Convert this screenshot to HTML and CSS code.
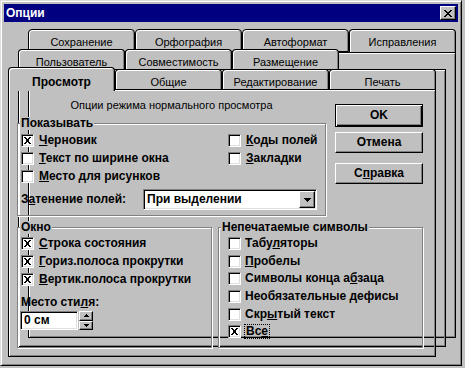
FILE: index.html
```html
<!DOCTYPE html>
<html lang="ru">
<head>
  <meta charset="UTF-8">
  <title>Опции</title>
  <link rel="stylesheet" href="styles.css">
</head>
<body>
  <div class="window">
    <div class="titlebar">
      <span class="title">Опции</span>
      <span class="close-btn raised"><svg width="8" height="7" viewBox="0 0 8 7"><path d="M0 0h2v1H0zM6 0h2v1H6zM1 1h2v1H1zM5 1h2v1H5zM2 2h4v1H2zM3 3h2v1H3zM2 4h4v1H2zM1 5h2v1H1zM5 5h2v1H5zM0 6h2v1H0zM6 6h2v1H6z"/></svg></span>
    </div>
    <div class="client">
      <div class="sheet sheet-1"></div>
      <div class="sheet sheet-2"></div>

      <div class="tabrow row-1">
        <div class="tab closed">Сохранение</div>
        <div class="tab closed">Орфография</div>
        <div class="tab closed">Автоформат</div>
        <div class="tab">Исправления</div>
      </div>
      <div class="tabrow row-2">
        <div class="tab">Пользователь</div>
        <div class="tab">Совместимость</div>
        <div class="tab">Размещение</div>
      </div>
      <div class="tabrow row-3">
        <div class="tab active">Просмотр</div>
        <div class="tab">Общие</div>
        <div class="tab">Редактирование</div>
        <div class="tab">Печать</div>
      </div>

      <div class="page">
        <div class="view-col">
          <p class="caption">Опции режима нормального просмотра</p>
          <div class="group show-group">
            <span class="group-title">Показывать</span>
            <div class="check-grid">
              <div class="check"><span class="box sunken"><svg width="7" height="7" viewBox="0 0 7 7"><path d="M0 0h2v1H0zM5 0h2v1H5zM1 1h2v1H1zM4 1h2v1H4zM2 2h3v1H2zM2 3h3v1H2zM2 4h3v1H2zM1 5h2v1H1zM4 5h2v1H4zM0 6h2v1H0zM5 6h2v1H5z"/></svg></span><span><u>Ч</u>ерновик</span></div>
              <div class="check"><span class="box sunken"></span><span><u>К</u>оды полей</span></div>
              <div class="check"><span class="box sunken"></span><span><u>Т</u>екст по ширине окна</span></div>
              <div class="check"><span class="box sunken"></span><span><u>З</u>акладки</span></div>
              <div class="check"><span class="box sunken"></span><span><u>М</u>есто для рисунков</span></div>
            </div>
            <div class="field-row">
              <span class="field-label">З<u>а</u>тенение полей:</span>
              <div class="select sunken">
                <span class="select-value">При выделении</span>
                <span class="drop-btn raised"><svg width="7" height="4" viewBox="0 0 7 4"><path d="M0 0h7v1H0zM1 1h5v1H1zM2 2h3v1H2zM3 3h1v1H3z"/></svg></span>
              </div>
            </div>
          </div>
        </div>

        <div class="buttons">
          <div class="btn default">OK</div>
          <div class="btn raised">Отмена</div>
          <div class="btn raised help"><span>С<u>п</u>равка</span></div>
        </div>

        <div class="bottom">
          <div class="group window-group">
            <span class="group-title">Окно</span>
            <div class="check"><span class="box sunken"><svg width="7" height="7" viewBox="0 0 7 7"><path d="M0 0h2v1H0zM5 0h2v1H5zM1 1h2v1H1zM4 1h2v1H4zM2 2h3v1H2zM2 3h3v1H2zM2 4h3v1H2zM1 5h2v1H1zM4 5h2v1H4zM0 6h2v1H0zM5 6h2v1H5z"/></svg></span><span><u>С</u>трока состояния</span></div>
            <div class="check"><span class="box sunken"><svg width="7" height="7" viewBox="0 0 7 7"><path d="M0 0h2v1H0zM5 0h2v1H5zM1 1h2v1H1zM4 1h2v1H4zM2 2h3v1H2zM2 3h3v1H2zM2 4h3v1H2zM1 5h2v1H1zM4 5h2v1H4zM0 6h2v1H0zM5 6h2v1H5z"/></svg></span><span><u>Г</u>ориз.полоса прокрутки</span></div>
            <div class="check"><span class="box sunken"><svg width="7" height="7" viewBox="0 0 7 7"><path d="M0 0h2v1H0zM5 0h2v1H5zM1 1h2v1H1zM4 1h2v1H4zM2 2h3v1H2zM2 3h3v1H2zM2 4h3v1H2zM1 5h2v1H1zM4 5h2v1H4zM0 6h2v1H0zM5 6h2v1H5z"/></svg></span><span><u>В</u>ертик.полоса прокрутки</span></div>
            <p class="style-label">Место сти<u>л</u>я:</p>
            <div class="spin-row">
              <span class="spin-input sunken">0 см</span>
              <span class="spinner">
                <span class="spin-btn raised"><svg width="5" height="3" viewBox="0 0 5 3"><path d="M2 0h1v1H2zM1 1h3v1H1zM0 2h5v1H0z"/></svg></span>
                <span class="spin-btn raised"><svg width="5" height="3" viewBox="0 0 5 3"><path d="M0 0h5v1H0zM1 1h3v1H1zM2 2h1v1H2z"/></svg></span>
              </span>
            </div>
          </div>

          <div class="group marks-group">
            <span class="group-title">Непечатаемые символы</span>
            <div class="check"><span class="box sunken"></span><span>Табу<u>л</u>яторы</span></div>
            <div class="check"><span class="box sunken"></span><span><u>П</u>робелы</span></div>
            <div class="check"><span class="box sunken"></span><span>Символы конца а<u>б</u>заца</span></div>
            <div class="check"><span class="box sunken"></span><span>Необязательные <u>д</u>ефисы</span></div>
            <div class="check"><span class="box sunken"></span><span>Скр<u>ы</u>тый текст</span></div>
            <div class="check"><span class="box sunken"><svg width="7" height="7" viewBox="0 0 7 7"><path d="M0 0h2v1H0zM5 0h2v1H5zM1 1h2v1H1zM4 1h2v1H4zM2 2h3v1H2zM2 3h3v1H2zM2 4h3v1H2zM1 5h2v1H1zM4 5h2v1H4zM0 6h2v1H0zM5 6h2v1H5z"/></svg></span><span class="focus">Вс<u>е</u></span></div>
          </div>
        </div>
      </div>
    </div>
  </div>
</body>
</html>
```

FILE: styles.css
```css
*{margin:0;padding:0;box-sizing:border-box}
html,body{width:465px;height:368px;overflow:hidden}
body{background:#c0c0c0;font-family:"Liberation Sans",Arial,sans-serif;font-size:11px;line-height:13px;color:#000}
u{text-decoration:underline;text-underline-offset:1px}
svg{display:block;shape-rendering:crispEdges}

/* 3d edges */
.raised{background:#c0c0c0;border:1px solid;border-color:#fff #000 #000 #fff;box-shadow:inset -1px -1px 0 #808080}
.sunken{background:#fff;border:1px solid;border-color:#808080 #fff #fff #808080;box-shadow:inset 1px 1px 0 #000,inset -1px -1px 0 #dfdfdf}

.window{width:462px;height:366px;padding:3px;border:1px solid;border-color:#dfdfdf #000 #000 #dfdfdf;box-shadow:inset 1px 1px 0 #fff,inset -1px -1px 0 #808080;display:flex;flex-direction:column}
.titlebar{height:18px;flex:none;background:#000080;display:flex;align-items:center;justify-content:space-between;padding:0 2px}
.title{color:#fff;font-weight:bold;font-size:12px}
.close-btn{width:16px;height:14px;display:flex;align-items:center;justify-content:center}
.client{position:relative;flex:1}

/* stacked tab sheets */
.sheet{position:absolute;width:428px;border:1px solid #000;box-shadow:inset 1px 1px 0 #fff,inset -1px -1px 0 #808080}
.sheet-1{left:24px;top:30px;height:286px}
.sheet-2{left:14px;top:47px;height:278px}
.tabrow{position:relative;display:flex;align-items:flex-start}
.row-1{margin:7px 0 0 24px}
.row-2{margin:-3px 0 0 14px}
.row-3{margin:0 0 0 4px;height:20px}
.tab{width:107px;height:20px;flex:none;padding-top:6px;background:#c0c0c0;border:1px solid #000;border-bottom:0;border-radius:4px 4px 0 0;box-shadow:inset 1px 1px 0 #fff,inset -1px 0 0 #808080;text-align:center;white-space:nowrap}
.row-1 .tab{height:23px}
.row-1 .tab.closed{border-bottom:1px solid #000}
.tab.active{position:relative;z-index:2;height:24px;margin-top:-2px;padding-top:8px;font-weight:bold;font-size:12px}

.page{position:relative;z-index:1;margin-left:4px;width:428px;height:268px;padding:9px 12px 0 8px;border:1px solid #000;box-shadow:inset 1px 1px 0 #fff,inset -1px -1px 0 #808080;display:grid;grid-template-columns:309px 88px;column-gap:9px;align-content:start}
.caption{text-align:center}

.group{position:relative;border:1px solid #808080;box-shadow:inset 1px 1px 0 #fff,1px 1px 0 #fff}
.group-title{position:absolute;top:-7px;left:2px;padding:0 1px;background:#c0c0c0;font-weight:bold;font-size:12px;line-height:13px;white-space:nowrap}
.show-group{margin-top:11px;padding:7px 0 5px 3px}
.check-grid{display:grid;grid-template-columns:207px 1fr;grid-auto-rows:18px}
.check{display:flex;align-items:center;height:18px;font-weight:bold;font-size:12px;white-space:nowrap}
.box{width:13px;height:13px;flex:none;margin-right:5px;display:flex;align-items:center;justify-content:center}
.field-row{display:flex;align-items:center;height:21px;margin-top:4px}
.field-label{width:122px;font-weight:bold;font-size:12px}
.select{width:174px;height:21px;padding:1px;display:flex;align-items:center}
.select-value{flex:1;padding-left:2px;font-weight:bold;font-size:12px}
.drop-btn{width:16px;height:17px;display:flex;align-items:center;justify-content:center}

.buttons{display:flex;flex-direction:column;padding-top:5px}
.btn{height:21px;display:flex;align-items:center;justify-content:center;font-weight:bold;font-size:12px}
.btn.default{height:23px;border:1px solid #000;box-shadow:inset 1px 1px 0 #fff,inset -1px -1px 0 #000,inset -2px -2px 0 #808080}
.btn + .btn{margin-top:5px}
.btn.help{margin-top:10px}

.bottom{grid-column:1/-1;display:flex;gap:6px;height:121px;margin-top:11px}
.window-group{width:195px;padding:6px 0 0 3px}
.marks-group{width:205px;padding:7px 0 0 9px}
.marks-group .check{height:17.6px}
.marks-group .box{margin-right:4px}
.style-label{margin-top:8px;font-weight:bold;font-size:12px}
.spin-row{display:flex;margin:2px 0 0 -1px}
.spin-input{width:58px;height:19px;padding:2px 0 0 3px;font-weight:bold;font-size:12px}
.spinner{width:14px;height:19px;margin-left:1px;display:flex;flex-direction:column}
.spin-btn{flex:1;display:flex;align-items:center;justify-content:center}
.focus{outline:1px dotted #000;padding:0 1px}
```
